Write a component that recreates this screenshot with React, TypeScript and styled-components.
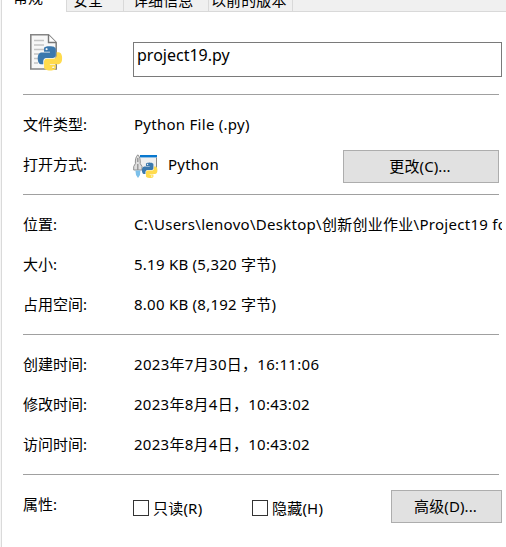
import React from "react";
import styled, { createGlobalStyle } from "styled-components";

const GlobalStyle = createGlobalStyle`
  * { box-sizing: border-box; }
  body {
    margin: 0;
    background: #fff;
    color: #000;
    font-family: "Noto Sans", "Noto Sans CJK SC", sans-serif;
    font-size: 15px;
  }
`;

const Sheet = styled.main`
  width: 506px;
  height: 547px;
  overflow: hidden;
  background: #fff;
  border-left: 1px solid #f6f6f6;
`;

const TabBar = styled.nav`
  display: flex;
  height: 12px;
  background: #f0f0f0;
  border-left: 1px solid #dadada;
`;

const Tab = styled.div<{ $width: number; $active?: boolean; $pad: number }>`
  width: ${(p) => p.$width}px;
  height: 12px;
  padding-left: ${(p) => p.$pad}px;
  overflow: hidden;
  display: flex;
  align-items: flex-end;
  background: ${(p) => (p.$active ? "#fff" : "#f0f0f0")};
  border-right: 1px solid #d9d9d9;
  border-bottom: ${(p) => (p.$active ? "0" : "1px solid #d9d9d9")};
`;

const TabLabel = styled.span<{ $drop: number }>`
  line-height: 20px;
  white-space: nowrap;
  letter-spacing: 0.1px;
  margin-bottom: ${(p) => p.$drop}px;
`;

const TabFill = styled.div`
  flex: 1;
  border-bottom: 1px solid #d9d9d9;
`;

const Panel = styled.section`
  height: 535px;
  border-left: 1px solid #dadada;
  padding-left: 21px;
`;

const Header = styled.header`
  display: flex;
  height: 82px;
  padding-top: 20px;
`;

const FileIconSlot = styled.div`
  width: 110px;
  padding-left: 5px;
`;

const NameField = styled.div`
  width: 369px;
  height: 35px;
  margin-top: 10px;
  padding: 2px 0 0 3px;
  border: 1px solid #7a7a7a;
  font-size: 16px;
  line-height: 20px;
`;

const Group = styled.div`
  width: 479px;
  padding: 10px 0 9px;
`;

const Divider = styled.div`
  width: 476px;
  height: 1px;
  background: #a0a0a0;
`;

const Row = styled.div`
  display: flex;
  align-items: center;
  height: 40px;
  padding-bottom: 2px;
  line-height: 20px;
`;

const Label = styled.span`
  width: 111px;
  flex: none;
`;

const Value = styled.span<{ $ls?: number }>`
  flex: 1;
  min-width: 0;
  overflow: hidden;
  white-space: nowrap;
  letter-spacing: ${(p) => p.$ls ?? 0}px;
`;

const AppIconSlot = styled.span`
  display: flex;
  width: 35px;
  margin-left: -1px;
  padding-top: 4px;
`;

const Button = styled.button<{ $width: number; $end?: number }>`
  width: ${(p) => p.$width}px;
  height: 33px;
  flex: none;
  padding: 0 2px 2px 0;
  margin: 5px ${(p) => p.$end ?? 0}px 0 0;
  border: 1px solid #adadad;
  border-radius: 0;
  background: #e1e1e1;
  color: #000;
  font: inherit;
  letter-spacing: 0.1px;
  line-height: 20px;
`;

const Checks = styled.div`
  display: flex;
  width: 257px;
  margin-left: -1px;
  margin-right: 1px;
  padding-top: 8px;
`;

const Check = styled.label<{ $width: number }>`
  display: flex;
  align-items: center;
  gap: 4px;
  width: ${(p) => p.$width}px;
  letter-spacing: 0.2px;
  white-space: nowrap;
`;

const Box = styled.span`
  width: 16px;
  height: 16px;
  border: 1px solid #333;
  background: #fff;
`;

const SNAKE =
  "M14.25.18l.9.2.73.26.59.3.45.32.34.34.25.34.16.33.1.3.04.26.02.2-.01.13V8.5l-.05.63-.13.55-.21.46-.26.38-.3.31-.33.25-.35.19-.35.14-.33.1-.3.07-.26.04-.21.02H8.77l-.69.05-.59.14-.5.22-.41.27-.33.32-.27.35-.2.36-.15.37-.1.35-.07.32-.04.27-.02.21v3.06H3.17l-.21-.03-.28-.07-.32-.12-.35-.18-.36-.26-.36-.36-.35-.46-.32-.59-.28-.73-.21-.88-.14-1.05-.05-1.23.06-1.22.16-1.04.24-.87.32-.71.36-.57.4-.44.42-.33.42-.24.4-.16.36-.1.32-.05.24-.01h.16l.06.01h8.16v-.83H6.18l-.01-2.75-.02-.37.05-.34.11-.31.17-.28.25-.26.31-.23.38-.2.44-.18.51-.15.58-.12.64-.1.71-.06.77-.04.84-.02 1.27.05zm-6.3 1.98l-.23.33-.08.41.08.41.23.34.33.22.41.09.41-.09.33-.22.23-.34.08-.41-.08-.41-.23-.33-.33-.22-.41-.09-.41.09z";

const Snakes = ({ transform }: { transform: string }) => (
  <g transform={transform}>
    <path d={SNAKE} fill="#3b78ad" />
    <path d={SNAKE} fill="#ffdb4d" transform="rotate(180 12 12)" />
  </g>
);

const PythonFileIcon = () => (
  <svg width="36" height="40" viewBox="0 0 36 40">
    <path d="M2.8 2.8H20.5L28.2 10.5V37H2.8Z" fill="#f7f7f7" stroke="#858585" strokeWidth="1.6" />
    <path d="M20.5 3V10.5H28" fill="#fff" stroke="#777" strokeWidth="1.4" />
    <path
      d="M6 8.5H16M6 13H16M6 17.5H16M6 22H11M6 26.5H10M6 31H10"
      stroke="#c4c4c4"
      strokeWidth="1.3"
    />
    <Snakes transform="translate(9.8 14.2) scale(1.01)" />
  </svg>
);

const LauncherIcon = () => (
  <svg width="25" height="25" viewBox="0 0 25 25">
    <path d="M6 1.5H23.5V16.5H6Z" fill="#efefef" />
    <path d="M7 2.2H24" stroke="#0878cf" strokeWidth="2.4" />
    <path d="M23.5 3.5V16" stroke="#8a8a8a" />
    <path
      d="M4.8.8C2.6 3 2.2 6 2.4 9.5L.7 12.5V16H9V12.5L7.2 9.5C7.4 6 7 3 4.8.8Z"
      fill="#dedede"
      stroke="#8f8f8f"
    />
    <path d="M4.8 4V8M4.8 10V16" stroke="#909090" strokeWidth="1.3" />
    <path d="M2.4 16.5H7.4L7 21L5 24L3 21Z" fill="#7cc0ea" />
    <Snakes transform="translate(9 8.6) scale(.64)" />
  </svg>
);

const sizes = [
  { label: "位置:", value: "C:\\Users\\lenovo\\Desktop\\创新创业作业\\Project19 for", ls: 0.28 },
  { label: "大小:", value: "5.19 KB (5,320 字节)", ls: 0.25 },
  { label: "占用空间:", value: "8.00 KB (8,192 字节)", ls: 0.25 },
];

const times = [
  { label: "创建时间:", value: "2023年7月30日，16:11:06", ls: 0.3 },
  { label: "修改时间:", value: "2023年8月4日，10:43:02", ls: 0.27 },
  { label: "访问时间:", value: "2023年8月4日，10:43:02", ls: 0.27 },
];

export default function App() {
  return (
    <>
      <GlobalStyle />
      <Sheet>
        <TabBar>
          <Tab $width={65} $pad={11} $active><TabLabel $drop={5}>常规</TabLabel></Tab>
          <Tab $width={57} $pad={6}><TabLabel $drop={1}>安全</TabLabel></Tab>
          <Tab $width={85} $pad={9}><TabLabel $drop={1}>详细信息</TabLabel></Tab>
          <Tab $width={84} $pad={2}><TabLabel $drop={1}>以前的版本</TabLabel></Tab>
          <TabFill />
        </TabBar>
        <Panel>
          <Header>
            <FileIconSlot><PythonFileIcon /></FileIconSlot>
            <NameField>project19.py</NameField>
          </Header>
          <Divider />
          <Group>
            <Row>
              <Label>文件类型:</Label>
              <Value $ls={0.27}>Python File (.py)</Value>
            </Row>
            <Row>
              <Label>打开方式:</Label>
              <AppIconSlot><LauncherIcon /></AppIconSlot>
              <Value $ls={0.2}>Python</Value>
              <Button $width={156} $end={3}>更改(C)...</Button>
            </Row>
          </Group>
          <Divider />
          <Group>
            {sizes.map((r) => (
              <Row key={r.label}>
                <Label>{r.label}</Label>
                <Value $ls={r.ls}>{r.value}</Value>
              </Row>
            ))}
          </Group>
          <Divider />
          <Group>
            {times.map((r) => (
              <Row key={r.label}>
                <Label>{r.label}</Label>
                <Value $ls={r.ls}>{r.value}</Value>
              </Row>
            ))}
          </Group>
          <Divider />
          <Group>
            <Row>
              <Label>属性:</Label>
              <Checks>
                <Check $width={119}><Box />只读(R)</Check>
                <Check $width={138}><Box />隐藏(H)</Check>
              </Checks>
              <Button $width={111}>高级(D)...</Button>
            </Row>
          </Group>
        </Panel>
      </Sheet>
    </>
  );
}
